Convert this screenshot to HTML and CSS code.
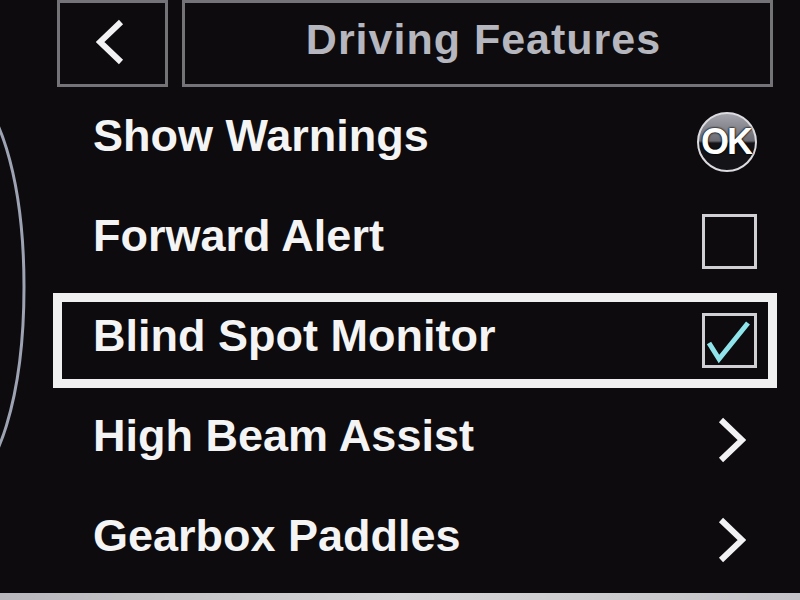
FILE: index.html
```html
<!DOCTYPE html>
<html lang="en">
<head>
    <meta charset="UTF-8">
    <meta name="viewport" content="width=device-width, initial-scale=1.0">
    <title>Driving Features</title>
    <link rel="stylesheet" href="styles.css">
</head>
<body>
    <div class="screen">
        <!-- edge of the speedo dial showing behind the menu -->
        <svg class="dial-edge" width="60" height="600" viewBox="0 0 60 600">
            <ellipse cx="-36" cy="287" rx="60" ry="196" fill="none" stroke="#9da3b3" stroke-width="3"/>
        </svg>

        <div class="topbar">
            <button class="back-btn" type="button">
                <svg width="28" height="46" viewBox="0 0 28 46">
                    <polyline points="25,3 4,23 25,43" fill="none" stroke="#f2f2f4" stroke-width="6" stroke-linejoin="miter"/>
                </svg>
            </button>
            <div class="title-box">
                <h1>Driving Features</h1>
            </div>
        </div>

        <ul class="menu">
            <li class="menu-item">
                <span class="label">Show Warnings</span>
                <span class="control"><span class="ok-badge">OK</span></span>
            </li>
            <li class="menu-item">
                <span class="label">Forward Alert</span>
                <span class="control"><span class="checkbox"></span></span>
            </li>
            <li class="menu-item selected">
                <span class="label">Blind Spot Monitor</span>
                <span class="control">
                    <span class="checkbox">
                        <svg width="49" height="49" viewBox="0 0 49 49">
                            <polyline points="4,27 14,43 43,7" fill="none" stroke="#8fe3ea" stroke-width="5"/>
                        </svg>
                    </span>
                </span>
            </li>
            <li class="menu-item">
                <span class="label">High Beam Assist</span>
                <span class="control"><svg class="chevron" width="28" height="46" viewBox="0 0 28 46"><polyline points="3,3 24,23 3,43" fill="none" stroke="#f2f2f4" stroke-width="6"/></svg></span>
            </li>
            <li class="menu-item">
                <span class="label">Gearbox Paddles</span>
                <span class="control"><svg class="chevron" width="28" height="46" viewBox="0 0 28 46"><polyline points="3,3 24,23 3,43" fill="none" stroke="#f2f2f4" stroke-width="6"/></svg></span>
            </li>
        </ul>

        <div class="bezel"></div>
    </div>
</body>
</html>
```

FILE: styles.css
```css
body {
    margin: 0;
    background-color: #0d0b0e;
    font-family: "Liberation Sans", Arial, sans-serif;
}
.screen {
    position: relative;
    height: 600px;
    display: flex;
    flex-direction: column;
    overflow: hidden;
}
.dial-edge {
    position: absolute;
    left: 0;
    top: 0;
}

/* header: back button + title */
.topbar {
    display: flex;
    gap: 14px;
    height: 87px;
    padding-left: 57px;
}
.back-btn {
    width: 111px;
    height: 87px;
    box-sizing: border-box;
    border: 3px solid #747478;
    background: transparent;
    display: flex;
    align-items: center;
    justify-content: center;
    padding: 0 6px 4px 0;
}
.title-box {
    width: 591px;
    height: 87px;
    box-sizing: border-box;
    border: 3px solid #747478;
    display: flex;
    align-items: center;
    justify-content: center;
    padding: 0 0 8px 12px;
}
.title-box h1 {
    margin: 0;
    font-size: 43px;
    font-weight: bold;
    line-height: 1;
    letter-spacing: 1px;
    color: #b6b6be;
}

/* menu list */
.menu {
    list-style: none;
    margin: -2px 0 0 53px;
    padding: 0;
    width: 724px;
}
.menu-item {
    display: flex;
    align-items: center;
    height: 100px;
    box-sizing: border-box;
    padding: 0 20px 0 40px;
}
.menu-item.selected {
    height: 95px;
    margin: 8px 0 -3px;
    border: 9px solid #f0f0f0;
    padding: 0 11px 0 31px;
}
.label {
    font-size: 45px;
    font-weight: bold;
    line-height: 1;
    color: #f4f4f4;
}
.menu-item.selected .label {
    margin-bottom: 10px;
}
.control {
    margin-left: auto;
    margin-top: 13px;
    display: flex;
    justify-content: flex-end;
}
.menu-item.selected .control {
    margin-top: 0;
}
.chevron {
    margin-right: 11px;
    margin-top: -4px;
}

.checkbox {
    width: 55px;
    height: 55px;
    box-sizing: border-box;
    border: 3px solid #cfcfd4;
    display: flex;
    align-items: center;
    justify-content: center;
}

.ok-badge {
    width: 60px;
    height: 60px;
    box-sizing: border-box;
    border-radius: 50%;
    border: 2px solid #dcdce0;
    background: linear-gradient(#a4a4ac 0%, #6a6a72 48%, #141418 52%, #141418 100%);
    color: #ffffff;
    font-size: 36px;
    font-weight: bold;
    letter-spacing: -2px;
    line-height: 1;
    display: flex;
    align-items: center;
    justify-content: center;
    padding-right: 2px;
    text-shadow: 0 0 2px #000, 0 0 2px #000;
}

.bezel {
    margin-top: auto;
    height: 7px;
    background: linear-gradient(90deg, #b8b8bc, #d6d6d8 50%, #c4c4c8);
}
```
